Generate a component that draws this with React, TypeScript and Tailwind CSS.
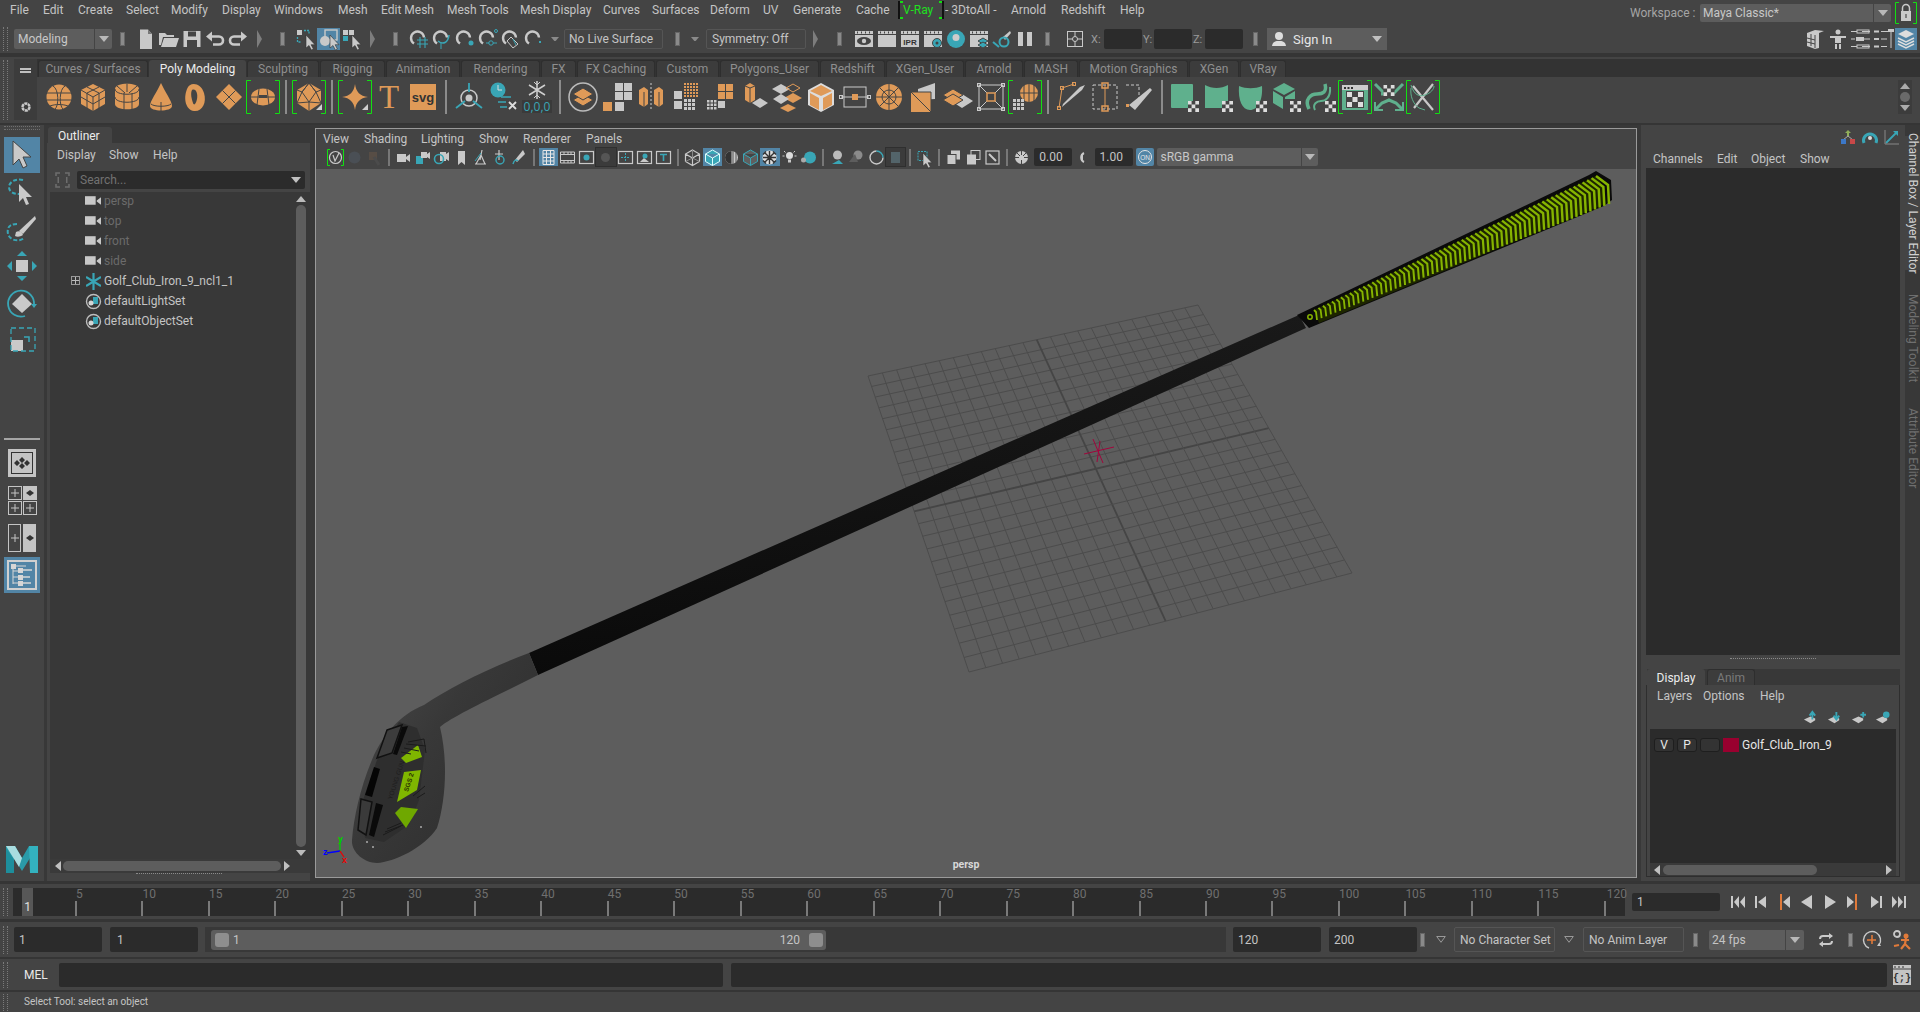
import React from 'react';

const G = '#c9c9c9', T = '#39a6b6', O = '#df9a58', M = '#5fb08d', D = '#444444';

type P = { children?: React.ReactNode };
const V = ({ s = 22, v = 22, children }: P & { s?: number; v?: number }) => (
  <svg width={s} height={s} viewBox={`0 0 ${v} ${v}`} className="block shrink-0 overflow-visible">{children}</svg>
);
const Slot = ({ children, active }: P & { active?: boolean }) => (
  <div className={`w-[23px] h-[22px] shrink-0 flex items-center justify-center ${active ? 'bg-[#5285a6]' : ''}`}>{children}</div>
);
const Sep = ({ c }: { c: string }) => (
  <div className={`${c} h-[20px] shrink-0 flex items-center justify-center`}>
    <div className="w-[3px] h-[12px] bg-[#8a8a8a] outline outline-1 outline-[#666]" />
  </div>
);
const Handle = ({ c }: { c: string }) => (
  <div className={`${c} w-[5px] shrink-0 border-x border-dotted border-[#7a7a7a]`} />
);
const Fold = ({ c }: { c: string }) => (
  <div className={`${c} shrink-0 flex items-center justify-center`}>
    <svg width="6" height="18" viewBox="0 0 6 18"><path d="M0 0l5 9-5 9z" fill="#7d7d7d" /></svg>
  </div>
);
const Tri = ({ c = '#b8b8b8', s = 10 }: { c?: string; s?: number }) => (
  <svg width={s} height={s * 0.6} viewBox="0 0 10 6" className="block shrink-0"><path d="M0 0h10L5 6z" fill={c} /></svg>
);
const HollowTri = () => (
  <svg width="10" height="7" viewBox="0 0 10 7" className="block shrink-0"><path d="M.7.5h8.6L5 6.3z" fill="none" stroke="#999" /></svg>
);
const Cur = ({ x = 0, y = 0, f = G }: { x?: number; y?: number; f?: string }) => (
  <path transform={`translate(${x} ${y})`} d="M0 0v13l3-2.5 2.4 4.5 2-1-2.3-4.3H9z" fill={f} stroke="#333" strokeWidth=".6" />
);
const Mag = ({ children }: P) => (
  <V>
    <path d="M5 15.5a6.5 6.5 0 1 1 10-6" fill="none" stroke={G} strokeWidth="2.4" />
    {children}
  </V>
);
const Clap = ({ children }: P) => (
  <V>
    <path d="M2 3h18v3H2z" fill={G} />
    <path d="M4 3.5h1v2H4zM8 3.5h1v2H8zM12 3.5h1v2h-1zM16 3.5h1v2h-1z" fill="#444" />
    <rect x="2" y="7" width="18" height="12" fill={G} />
    {children}
  </V>
);

const statusA = [
  <V key="a"><path d="M5 1.500h8l4 4.500v15H5z" fill={G} /><path d="M13 1.500v4.500h4z" fill="#777" /></V>,
  <V key="b"><path d="M1 5h6l2 2h7v2H5l-2 8H1z" fill={G} /><path d="M6 10h15l-3 9H3z" fill={G} /></V>,
  <V key="c"><path d="M2.500 3h17v16h-17z" fill={G} /><rect x="7" y="3.500" width="8" height="5" fill="#444" /><rect x="6" y="12" width="10" height="7" fill="#444" /></V>,
  <V key="d"><path d="M7 8.500h8a4 4 0 0 1 0 8H9" fill="none" stroke={G} strokeWidth="2.600" /><path d="M8 3.500v10l-6-5z" fill={G} /></V>,
  <V key="e"><path d="M15 8.500H7a4 4 0 0 0 0 8h6" fill="none" stroke={G} strokeWidth="2.600" /><path d="M14 3.500v10l6-5z" fill={G} /></V>,
];
const statusB = [
  <V key="a"><rect x="2" y="2" width="5" height="5" fill={G} /><path d="M9 2.500h5v4M2.500 9v5h4" fill="none" stroke={T} strokeWidth="1.300" strokeDasharray="2 1" /><Cur x={11} y={7} /></V>,
  <V key="b"><rect x="7" y="2" width="12" height="10" fill="none" stroke={G} strokeWidth="1.400" /><circle cx="7" cy="13" r="5" fill={G} /><Cur x={12} y={7} /></V>,
  <V key="c"><rect x="2" y="2" width="5" height="5" fill={G} /><rect x="8" y="2" width="5" height="5" fill={G} /><rect x="2" y="8" width="5" height="5" fill={T} /><Cur x={11} y={7} /></V>,
];
const magnets = [
  <Mag key="a"><path d="M8 12h11M8 16h11M11 9v11M16 9v11" stroke={T} strokeWidth="1.100" /></Mag>,
  <Mag key="b"><path d="M6 13c5 4 10 2 11-6" fill="none" stroke={T} strokeWidth="1.600" /><path d="M9 15v6" stroke={T} /></Mag>,
  <Mag key="c"><circle cx="16" cy="15" r="2.500" fill={T} /></Mag>,
  <Mag key="d"><circle cx="13" cy="15" r="2.200" fill="none" stroke={T} /><circle cx="18" cy="3" r="1.500" fill="none" stroke={T} /><path d="M8 15h3M15 15h4" stroke={T} /></Mag>,
  <Mag key="e"><path d="M10 9l7 7-5 4-6-7z" fill="none" stroke={G} /><path d="M12 11l3 6" stroke={T} /></Mag>,
  <Mag key="f"><path d="M16 13v2" stroke={T} strokeWidth="2" /></Mag>,
];
const render = [
  <Clap key="a"><ellipse cx="11" cy="13" rx="7" ry="4" fill="#444" /><circle cx="11" cy="13" r="2.200" fill={G} /></Clap>,
  <Clap key="b" />,
  <Clap key="c"><text x="11" y="17" textAnchor="middle" fontSize="8" fontWeight="700" fill="#333" fontFamily="Liberation Sans, sans-serif">IPR</text></Clap>,
  <Clap key="d"><circle cx="15" cy="15" r="4.500" fill={T} stroke="#444" /><circle cx="15" cy="15" r="1.500" fill="#444" /></Clap>,
  <V key="e"><circle cx="11" cy="11" r="9" fill={T} /><circle cx="11" cy="9.500" r="3.500" fill="#ccc" /></V>,
  <Clap key="f"><path d="M15 10l5 3-5 3-5-3z" fill={T} stroke="#444" /><path d="M15 14l5 3-5 3-5-3z" fill={T} stroke="#444" /></Clap>,
  <V key="g"><path d="M12 9l7-6 1 2-6 7z" fill={G} /><circle cx="13" cy="14" r="4.500" fill="none" stroke={T} strokeWidth="2" /><path d="M2 14l6 5" stroke={T} strokeWidth="2" /></V>,
  <V key="h"><rect x="4" y="4" width="5" height="14" fill={G} /><rect x="13" y="4" width="5" height="14" fill={G} /></V>,
];

const right = [
  <V key="a"><path d="M3 5l8-3 9 1-5 2v15l-4 1-8-3z" fill={G} /><path d="M7 6v12M11 7v13M3 10l8 2M3 14l8 2" stroke="#444" /></V>,
  <V key="b"><circle cx="11" cy="4" r="2.500" fill={G} /><path d="M3 8h16v2h-5v5h-6v-5H3z" fill={G} /><path d="M8 16h2v5H8zM12 16h2v5h-2z" fill={G} /></V>,
  <V key="c"><path d="M1 3.500h6M12 3.500h8M1 11h4M12 11h8M1 18.500h6M12 18.500h8" stroke={G} /><rect x="7" y="2" width="12" height="3" fill="none" stroke={G} /><rect x="6" y="9" width="8" height="4" fill={G} /><rect x="7" y="17" width="12" height="3" fill="none" stroke={G} /></V>,
  <V key="d"><path d="M1 3.500h5M1 11h5M1 18.500h5" stroke={G} strokeWidth="2" /><path d="M8 3.500h10M8 11h6M8 18.500h6" stroke={G} /><path d="M18 2v18" stroke={G} /><rect x="15" y="1" width="6" height="3" fill={G} /></V>,
];

const O1 = { fill: O };
const Br = () => <path d="M5 .5H.5v33H5M29 .5h4.500v33H29" fill="none" stroke="#12e012" />;
const Corner = () => <path d="M30 30h-6l6-6z" fill="#cfcfcf" />;
const Chk = ({ x, y }: { x: number; y: number }) => (
  <g transform={`translate(${x} ${y})`}><rect width="11" height="11" fill="#444" /><path d="M0 0h3.600v3.600H0zM7.300 0H11v3.600H7.300zM3.600 3.600h3.700v3.700H3.600zM0 7.300h3.600V11H0zM7.300 7.300H11V11H7.300z" fill="#ddd" /></g>
);
const Sq = ({ x, y, s = 7, f = '#c8c8c8' }: { x: number; y: number; s?: number; f?: string }) => <rect x={x} y={y} width={s} height={s} fill={f} />;
const Dots = ({ x, y, n = 3, f = '#c8c8c8', g = 3 }: { x: number; y: number; n?: number; f?: string; g?: number }) => (
  <g>{Array.from({ length: n * n }).map((_, i) => <rect key={i} x={x + (i % n) * g} y={y + Math.floor(i / n) * g} width={g - 1} height={g - 1} fill={f} />)}</g>
);
const Nodes = ({ pts, f = '#ccc' }: { pts: number[][]; f?: string }) => (
  <g>{pts.map((p, i) => <rect key={i} x={p[0] - 1.500} y={p[1] - 1.500} width="3" height="3" fill="none" stroke={f} />)}</g>
);
const Dia = ({ x, y, w, h, f, st }: { x: number; y: number; w: number; h: number; f: string; st?: string }) => (
  <path d={`M${x} ${y - h}L${x + w} ${y}L${x} ${y + h}L${x - w} ${y}z`} fill={f} stroke={st} />
);

const shelf1 = [
  <g key="a"><circle cx="17" cy="17" r="12.500" {...O1} /><path d="M5 13h24M4.500 20h25M8 26c5-2 13-2 18 0M11 6c6 3 6 20 2 23M23 6c-6 3-6 20-2 23" fill="none" stroke="#444" /></g>,
  <g key="b"><path d="M17 4l12 6v14l-12 7-12-7V10z" {...O1} /><path d="M5 10l12 7 12-7M17 17v14M11 7l12 6v15M23 7l-12 6v15M5 17l12 7 12-7" fill="none" stroke="#444" /></g>,
  <g key="c"><path d="M5 9c0-7 24-7 24 0v15c0 7-24 7-24 0z" {...O1} /><path d="M5 9c0 7 24 7 24 0M5 17c0 7 24 7 24 0M14 13v17M22 13v17M17 4v8M7 6l8 7M27 6l-8 7" fill="none" stroke="#444" /></g>,
  <g key="d"><path d="M17 3c4 9 11 18 11 23 0 6-22 6-22 0 0-5 7-14 11-23z" {...O1} /><path d="M17 22v9M7 24c3 3 17 3 20 0" fill="none" stroke="#444" /></g>,
  <g key="e"><path d="M9 9c3-8 14-6 17 4 3 10-2 19-10 18C8 30 5 19 9 9z" {...O1} /><path d="M14 10c4-2 6 4 5 9s-3 7-4 4-3-9-1-13z" fill="#444" /></g>,
  <g key="f"><path d="M17 4l13 13-13 13L4 17z" {...O1} /><path d="M10.500 10.500l13 13M23.500 10.500l-13 13" stroke="#444" /></g>,
  <g key="g"><Br /><ellipse cx="17" cy="17" rx="12" ry="8.500" {...O1} /><path d="M5 17h24M13 9l-2 16M21 9l2 16" stroke="#444" /><rect x="13" y="15" width="8" height="3" fill="#444" /></g>,
];
const shelf2 = [<g key="a"><Br /><path d="M17 3l12 7v13l-12 8-12-8V10z" {...O1} /><path d="M17 3l-7 9 7 10 7-10zM5 10l5 2 7-9 7 9 5-2M10 12l-5 11 12-1 12 1-5-11M17 22v9" fill="none" stroke="#444" /><Corner /></g>];
const shelf3 = [
  <g key="a"><Br /><path d="M17 4c1 8 5 12 13 13-8 1-12 5-13 13-1-8-5-12-13-13 8-1 12-5 13-13z" {...O1} /><Corner /></g>,
  <text key="b" x="17" y="28" textAnchor="middle" fontSize="33" fontWeight="400" fill={O} fontFamily="Liberation Serif, serif">T</text>,
  <g key="c"><rect x="4" y="4" width="26" height="26" {...O1} /><text x="17" y="22" textAnchor="middle" fontSize="13" fontWeight="700" fill="#333" fontFamily="Liberation Sans, sans-serif">svg</text></g>,
];
const shelf4 = [
  <g key="a"><circle cx="17" cy="18" r="8" fill="none" stroke={G} strokeWidth="1.500" /><circle cx="17" cy="18" r="3.500" fill={G} /><path d="M17 3v9M13 21l-9 7M21 21l9 7" stroke={T} strokeWidth="1.800" /></g>,
  <g key="b"><circle cx="12" cy="10" r="7.500" fill={T} /><path d="M12 5v5h4" stroke="#ddd" fill="none" /><path d="M15 17h10M12 22h8M14 27h7" stroke={T} strokeWidth="1.300" /><path d="M23 22l7 7M30 22l-7 7" stroke="#ddd" strokeWidth="1.800" /></g>,
  <g key="c"><path d="M17 1v18M9 5l16 10M25 5L9 15" stroke="#cfcfcf" strokeWidth="1.500" /><path d="M14 2l3 3 3-3M14 18l3-3 3 3" stroke="#cfcfcf" fill="none" /><rect x="2" y="20" width="30" height="13" fill="#3a3a3a" /><text x="17" y="31" textAnchor="middle" fontSize="12" fill={T} fontFamily="Open Sans, sans-serif">0,0,0</text></g>,
];
const shelf5 = [
  <g key="a"><circle cx="17" cy="17" r="14" fill="none" stroke="#bbb" strokeWidth="1.500" /><Dia x={17} y={20} w={10} h={6} f={O} st="#444" /><Dia x={17} y={14} w={10} h={6} f={O} st="#444" /></g>,
  <g key="b"><Sq x={15} y={3} s={8} /><Sq x={24} y={3} s={8} /><Sq x={24} y={12} s={8} /><Sq x={15} y={12} s={8} /><Sq x={3} y={22} s={9} f={O} /><Sq x={15} y={22} s={9} /></g>,
  <g key="c"><path d="M5 10l5-3 4 3v14l-4 3-5-3zM20 10l5-3 4 3v14l-4 3-5-3z" {...O1} /><path d="M17 3v28" stroke="#ccc" strokeDasharray="2 2" /><path d="M10 12v15M25 12v15" stroke="#444" /></g>,
  <g key="d"><Dots x={16} y={3} n={5} f={O} /><Sq x={6} y={11} s={8} /><Sq x={6} y={21} s={8} /><Dots x={16} y={19} n={3} g={4} /></g>,
  <g key="e"><Dots x={5} y={20} n={3} g={3.500} /><Sq x={16} y={4} s={7} f={O} /><Sq x={24} y={4} s={7} f={O} /><Sq x={16} y={12} s={7} f={O} /><Sq x={24} y={12} s={7} f={O} /><Sq x={16} y={21} s={7} /></g>,
  <g key="f"><path d="M9 6l5-3 5 3v14l-5 3-5-3z" {...O1} /><path d="M14 8v15M9 6l5 2 5-2" stroke="#444" fill="none" /><Dia x={24} y={23} w={8} h={5} f="#c8c8c8" /></g>,
  <g key="g"><Dia x={11} y={9} w={9} h={5} f="#c8c8c8" /><Dia x={23} y={8} w={7} h={4} f="none" st={O} /><Dia x={23} y={18} w={9} h={5} f={O} /><Dia x={11} y={19} w={8} h={5} f="#c8c8c8" /><Dia x={18} y={28} w={8} h={4} f={O} /></g>,
  <g key="h"><path d="M17 3l13 7v15l-13 7-13-7V10z" fill="#ddd" /><path d="M17 5l11 6-11 5-11-5z" {...O1} /><path d="M6 13l9 5v12l-9-5z" {...O1} /><path d="M19 18l9-5v12l-9 5z" {...O1} /></g>,
  <g key="i"><rect x="6" y="7" width="22" height="20" fill="none" stroke={G} /><path d="M3 17h28" stroke={G} /><Nodes pts={[[3, 17], [31, 17]]} /><Sq x={14} y={14} s={6} f={O} /></g>,
  <g key="j"><circle cx="17" cy="17" r="13" {...O1} /><circle cx="17" cy="17" r="7" fill="none" stroke="#444" /><path d="M17 4v26M4 17h26M8 8l18 18M26 8L8 26" stroke="#444" /></g>,
  <g key="k"><path d="M12 9L29 3v16L12 20z" fill="#c8c8c8" /><path d="M5 12l20 20H5z" {...O1} /><path d="M5 12h20v20z" fill={O} stroke="#444" /></g>,
  <g key="l"><Dia x={22} y={21} w={11} h={7} f="#c8c8c8" /><Dia x={13} y={15} w={10} h={6} f={O} st="#444" /><Dia x={13} y={20} w={10} h={6} f={O} st="#444" /></g>,
  <g key="m"><rect x="5" y="5" width="24" height="24" fill="none" stroke={G} /><path d="M5 5l24 24M29 5L5 29" stroke={G} /><Nodes pts={[[5, 5], [29, 5], [5, 29], [29, 29]]} /><rect x="13" y="13" width="8" height="8" fill="#444" stroke={O} strokeWidth="1.500" /></g>,
  <g key="n"><Br /><circle cx="21" cy="13" r="9" {...O1} /><path d="M12 13h18M21 4v18M16 5v16M26 5v16" stroke="#444" /><Dots x={5} y={19} n={3} g={4} /></g>,
];
const shelf6 = [
  <g key="a"><path d="M5 28l3-20 12-4" fill="none" stroke={O} /><Nodes pts={[[5, 28], [8, 8], [20, 4]]} f={O} /><path d="M8 27L28 10l3-5-5 2L9 24z" fill="#c8c8c8" /></g>,
  <g key="b"><rect x="5" y="5" width="24" height="24" fill="none" stroke={G} strokeDasharray="3 2" /><path d="M17 5v24" stroke={O} /><rect x="14" y="3" width="6" height="5" fill="none" stroke={O} strokeWidth="1.500" /><rect x="14" y="26" width="6" height="5" fill="none" stroke={O} strokeWidth="1.500" /></g>,
  <g key="c"><path d="M4 5h13v13" fill="none" stroke={G} strokeDasharray="3 2" /><path d="M7 25L28 8l2 2-17 20z" fill="#c8c8c8" /><rect x="4" y="24" width="3" height="3" fill={O} /></g>,
];
const Gn = ({ children }: P) => <g>{children}</g>;
const shelf7 = [
  <Gn key="a"><rect x="3" y="4" width="22" height="24" rx="1" fill={M} /><Chk x={20} y={21} /></Gn>,
  <Gn key="b"><path d="M3 5c7 4 16 4 23 0v23H3z" fill={M} /><Chk x={20} y={21} /></Gn>,
  <Gn key="c"><path d="M3 6c7 3 16 3 23 0 1 14-4 24-12 24S2 20 3 6z" fill={M} /><Chk x={20} y={21} /></Gn>,
  <Gn key="d"><path d="M14 3l11 6-11 6L3 9z" fill={M} /><path d="M3 11l10 6v12L3 23zM15 17l10-6v8H15z" fill={M} /><Chk x={20} y={21} /></Gn>,
  <Gn key="e"><path d="M5 29c-5-10 2-15 8-15s10-2 8-10" fill="none" stroke={M} strokeWidth="3.500" /><path d="M11 30c-3-6 2-9 6-9s10-3 9-14" fill="none" stroke={M} strokeWidth="2" /><Chk x={21} y={21} /></Gn>,
  <Gn key="f"><Br /><rect x="4" y="5" width="26" height="25" fill={M} /><rect x="4" y="5" width="26" height="5" fill="#ccc" /><path d="M6 7h2v2H6zM9.500 7h2v2h-2zM13 7h2v2h-2z" fill="#333" /><rect x="8" y="11" width="18" height="17" fill="#444" /><path d="M9 12h5v5H9zM20 12h5v5h-5zM14.500 17h5v5h-5zM9 22h5v5H9zM20 22h5v5h-5z" fill="#ddd" /></Gn>,
  <Gn key="g"><path d="M3 4l10 10H9l8 0M31 4L21 14M3 30l7-7 7-3 7 3 7 7" fill="none" stroke={M} strokeWidth="3" /><path d="M3 22v8h8M31 22v8h-8" fill="none" stroke={M} strokeWidth="2" /><Chk x={11.500} y={5} /></Gn>,
  <Gn key="h"><Br /><path d="M7 6l20 24M27 4L8 28" stroke="#c8c8c8" strokeWidth="2.200" /><path d="M5 5c3 10 8 12 14 10s9-6 9-9M5 8c-1 8 2 16 8 20l6 2" fill="none" stroke={M} /></Gn>,
];

const ShelfIcon = ({ children }: P) => (
  <div className="w-[34px] h-[34px] shrink-0"><V s={34} v={34}>{children}</V></div>
);
const ShelfSep = () => (
  <div className="w-[12px] h-[34px] shrink-0 flex justify-center"><div className="w-[2px] h-full bg-[#8c8c8c]" /></div>
);

const menus: [string, string][] = [
  ['File', 'w-[33px]'], ['Edit', 'w-[35px]'], ['Create', 'w-[48px]'], ['Select', 'w-[45px]'], ['Modify', 'w-[51px]'], ['Display', 'w-[52px]'],
  ['Windows', 'w-[64px]'], ['Mesh', 'w-[43px]'], ['Edit Mesh', 'w-[66px]'], ['Mesh Tools', 'w-[73px]'], ['Mesh Display', 'w-[83px]'],
  ['Curves', 'w-[49px]'], ['Surfaces', 'w-[58px]'], ['Deform', 'w-[53px]'], ['UV', 'w-[30px]'], ['Generate', 'w-[63px]'], ['Cache', 'w-[42px]'],
];
const menus2: [string, string][] = [['- 3DtoAll -', 'w-[66px]'], ['Arnold', 'w-[50px]'], ['Redshift', 'w-[59px]'], ['Help', 'w-[30px]']];

const tabs: [string, string][] = [
  ['Curves / Surfaces', 'w-[110px]'], ['Poly Modeling', 'w-[97px]'], ['Sculpting', 'w-[72px]'], ['Rigging', 'w-[65px]'], ['Animation', 'w-[74px]'], ['Rendering', 'w-[79px]'],
  ['FX', 'w-[35px]'], ['FX Caching', 'w-[78px]'], ['Custom', 'w-[63px]'], ['Polygons_User', 'w-[99px]'], ['Redshift', 'w-[65px]'], ['XGen_User', 'w-[78px]'], ['Arnold', 'w-[58px]'],
  ['MASH', 'w-[54px]'], ['Motion Graphics', 'w-[109px]'], ['XGen', 'w-[50px]'], ['VRay', 'w-[46px]'],
];

const VI = ({ children, a, box }: P & { a?: boolean; box?: boolean }) => (
  <div className={`w-[19.25px] h-[18px] shrink-0 flex items-center justify-center ${a ? 'bg-[#5285a6]' : ''} ${box ? 'bg-[#3b3b3b] outline outline-1 outline-[#2f2f2f]' : ''}`}>
    <V s={17} v={17}>{children}</V>
  </div>
);
const VSep = () => <div className="w-[10px] h-[17px] shrink-0 flex justify-center"><div className="w-[2px] h-full bg-[#777]" /></div>;
const W = { fill: 'none', stroke: G, strokeWidth: 1.200 };
const vBar1 = [
  <VI key="a"><path d="M3 .5H.5v16H3M14 .5h2.500v16H14" fill="none" stroke="#12e012" /><circle cx="8.500" cy="8.500" r="6" {...W} /><path d="M6 6l2 6 4-8" {...W} /></VI>,
  <VI key="b"><circle cx="8.500" cy="8.500" r="6" fill="#4a4f55" /></VI>,
  <VI key="c"><rect x="3" y="3" width="8" height="8" fill="#574d45" /><path d="M8 8l5 8" stroke="#4b4b4b" strokeWidth="3" /></VI>,
];
const vBar2 = [
  <VI key="a"><rect x="2" y="5" width="9" height="8" fill={G} /><path d="M11 8l4-3v8l-4-3z" fill={G} /></VI>,
  <VI key="b"><rect x="2" y="7" width="7" height="8" fill={T} /><rect x="7" y="3" width="6" height="6" fill={G} /><path d="M13 5l3-2v7l-3-2z" fill={G} /></VI>,
  <VI key="c"><rect x="7" y="3" width="6" height="9" fill={G} /><path d="M13 5l3-2v9l-3-2z" fill={G} /><circle cx="6" cy="10" r="4.500" fill="none" stroke={T} strokeWidth="1.600" /></VI>,
  <VI key="d"><path d="M5 2h7v14l-3.500-3L5 16z" fill={G} /></VI>,
  <VI key="e"><path d="M10 1l-2 10M3 15h11M4 15l5-9 4 9" {...W} /><path d="M3 12l6-8" stroke={T} /></VI>,
  <VI key="f"><path d="M8 1v10M4 5h8" {...W} /><circle cx="9" cy="11" r="4" fill="none" stroke={T} strokeWidth="1.400" /></VI>,
  <VI key="g"><path d="M13 1L5 11l2 2 8-8z" fill={G} /><path d="M3 15c1-4 3-5 5-3" fill="none" stroke={T} strokeWidth="1.400" /></VI>,
];
const vBar3 = [
  <VI key="a" a><path d="M3 1.500h11v14H3zM3 5h11M3 8.500h11M3 12h11M6.500 1.500v14M10.500 1.500v14" fill="none" stroke="#e6e6e6" /></VI>,
  <VI key="b"><path d="M1.500 3h14v11h-14zM1.500 5.500h14M1.500 11.500h14M5 3v2.500M9 3v2.500M12 3v2.500M5 11.500V14M9 11.500V14M12 11.500V14" fill="none" stroke={G} /></VI>,
  <VI key="c"><rect x="1.500" y="2.500" width="14" height="12" {...W} /><circle cx="8.500" cy="8.500" r="3" fill={T} /></VI>,
  <VI key="d" box><circle cx="8.500" cy="8.500" r="4.500" fill="#555" /></VI>,
  <VI key="e"><rect x="1.500" y="2.500" width="14" height="12" {...W} /><path d="M8.500 4v9M4 8.500h9" stroke={T} strokeDasharray="2 1" /></VI>,
  <VI key="f"><rect x="1.500" y="2.500" width="14" height="12" {...W} /><path d="M4 13l4-4 5 4z" fill={G} /><circle cx="9" cy="7" r="2.500" fill={T} /></VI>,
  <VI key="g"><rect x="1.500" y="2.500" width="14" height="12" {...W} /><path d="M5 5.500h7M8.500 5.500V12" stroke={T} strokeWidth="1.600" /></VI>,
];
const cube = 'M8.500 1l7 4v7.500l-7 4-7-4V5zM1.500 5l7 4 7-4M8.500 9v7.500';
const vBar4 = [
  <VI key="a"><path d={cube} {...W} /><path d="M1.500 12.500l7-3.500 7 3.500M8.500 1v8" fill="none" stroke="#888" /></VI>,
  <VI key="b" a><path d={cube} fill={T} stroke="#dff" /></VI>,
  <VI key="c"><circle cx="8.500" cy="8.500" r="6.500" fill={G} /><path d="M8.500 2a6.500 6.500 0 0 0 0 13z" fill="#333" /><path d="M10 2v13M13 3.500v10" stroke="#555" /></VI>,
  <VI key="d"><path d={cube} fill="#5f5f5f" stroke={T} /></VI>,
  <VI key="e" a><circle cx="8.500" cy="8.500" r="7" fill="#ddd" /><path d="M4 4l9 9M13 4l-9 9M2 8.500h13M8.500 2v13M5 2.500l-3 3M12 2.500l3 3M5 14.500l-3-3M12 14.500l3-3" stroke="#333" strokeWidth="1.400" /></VI>,
  <VI key="f"><circle cx="8.500" cy="6.500" r="3.500" fill="#ddd" /><rect x="7" y="10.500" width="3" height="3" fill={G} /><path d="M3 2l1.500 1.500M14 2l-1.500 1.500M1.500 7h2M13.500 7h2" stroke={G} /></VI>,
  <VI key="g"><circle cx="10" cy="8.500" r="6" fill={T} /><circle cx="3.500" cy="11" r="2.500" fill="#aaa" /></VI>,
];
const vBar5 = [
  <VI key="a"><circle cx="8.500" cy="6" r="4.500" fill="#bbb" /><path d="M3 15l7-4 4 4" fill={T} /></VI>,
  <VI key="b"><circle cx="10" cy="6" r="4.500" fill="#8b8b8b" /><path d="M1 13l6-8 3 8z" fill="#5d5d5d" /></VI>,
  <VI key="c"><path d="M8.500 2A6.500 6.500 0 1 0 15 8.500" fill="none" stroke={G} strokeWidth="1.400" /><path d="M15 8.500A6.500 6.500 0 0 0 8.500 2" fill="none" stroke={T} strokeWidth="1.400" /></VI>,
  <VI key="d" box><rect x="4" y="3" width="9" height="11" fill="#53646a" /></VI>,
];
const vBar6 = [
  <VI key="a"><path d="M2 2.500h9v9H2z" fill="none" stroke={T} strokeDasharray="2 1" /><Cur x={7} y={4} /></VI>,
  <VI key="b"><rect x="6" y="1.500" width="9" height="9" fill={G} /><rect x="2" y="5.500" width="9" height="10" fill={G} stroke="#444" /></VI>,
  <VI key="c"><rect x="6" y="1.500" width="9" height="9" fill="none" stroke={G} /><rect x="2" y="5.500" width="9" height="10" fill={G} /></VI>,
  <VI key="d"><rect x="2" y="2" width="13" height="13" {...W} /><path d="M5 5l7 7" stroke={G} strokeWidth="2" /></VI>,
];

const Dark = ({ c, children }: P & { c: string }) => <div className={`${c} bg-[#2b2b2b] rounded-[2px] shrink-0 flex items-center text-[#c4c4c4]`}>{children}</div>;

const Cam = () => <svg width="16" height="12" viewBox="0 0 15 11" className="block shrink-0"><rect y="1" width="10" height="8" fill="#c8c8c8" /><path d="M11 5l4-3v7l-4-3z" fill="#c8c8c8" /></svg>;
const SetIc = () => (
  <V s={17} v={17}><circle cx="8.500" cy="8.500" r="7" fill="none" stroke="#bdbdbd" strokeWidth="1.400" /><path d="M8 4h5v7H8z" fill={T} /><circle cx="6" cy="10" r="2.500" fill="#d5d5d5" /></V>
);

const Row = ({ icon, text, dim, plus }: { icon: React.ReactNode; text: string; dim?: boolean; plus?: boolean }) => (
  <div className="h-[20px] flex items-center relative pl-[34px]">
    {plus && <div className="absolute left-[21px] top-[5px] w-[9px] h-[9px] border border-[#999] text-[#bbb] flex items-center justify-center"><svg width="7" height="7"><path d="M3.500 0v7M0 3.500h7" stroke="#bbb" /></svg></div>}
    <div className="w-[18px] flex justify-center shrink-0">{icon}</div>
    <span className={`ml-[2px] ${dim ? 'text-[#6b6b6b]' : 'text-[#c4c4c4]'}`}>{text}</span>
  </div>
);

const Tool = ({ children, a }: P & { a?: boolean }) => (
  <div className={`w-[36px] h-[36px] shrink-0 flex items-center justify-center ${a ? 'bg-[#5285a6]' : ''}`}><V s={34} v={34}>{children}</V></div>
);

const homography = () => {
  const [x0, y0, x1, y1, x2, y2, x3, y3] = [869, 376, 1199, 305, 1353, 573, 970, 672];
  const dx1 = x1 - x2, dx2 = x3 - x2, sx = x0 - x1 + x2 - x3, dy1 = y1 - y2, dy2 = y3 - y2, sy = y0 - y1 + y2 - y3;
  const den = dx1 * dy2 - dx2 * dy1;
  const g = (sx * dy2 - dx2 * sy) / den, h = (dx1 * sy - sx * dy1) / den;
  const a = x1 - x0 + g * x1, b = x3 - x0 + h * x3, d = y1 - y0 + g * y1, e = y3 - y0 + h * y3;
  return (u: number, v: number) => {
    const w = g * u + h * v + 1;
    return [(a * u + b * v + x0) / w, (d * u + e * v + y0) / w];
  };
};

const Grid = () => {
  const H = homography();
  const n = 24;
  const lines: React.ReactNode[] = [];
  for (let i = 0; i <= n; i++) {
    const t = i / n;
    const [a, b] = H(t, 0), [c, d] = H(t, 1), [e, f] = H(0, t), [g, h] = H(1, t);
    const mid = i === n / 2;
    lines.push(<line key={`u${i}`} x1={a} y1={b} x2={c} y2={d} stroke={mid ? '#454545' : '#4c4c4c'} strokeWidth={mid ? 1.800 : 1} />);
    lines.push(<line key={`v${i}`} x1={e} y1={f} x2={g} y2={h} stroke={mid ? '#454545' : '#4c4c4c'} strokeWidth={mid ? 1.800 : 1} />);
  }
  return <g>{lines}</g>;
};

const Grip = () => {
  const out: React.ReactNode[] = [];
  const n = 64;
  for (let i = 0; i < n; i++) {
    const t = i / (n - 1);
    const x0 = 1315 + (1597 - 1315) * t, y0 = 310 + (176 - 310) * t;
    const dx = 2 + 10 * t, dy = 2 + 7 * t, h = 8 + 11 * t;
    out.push(<polyline key={i} points={`${x0},${y0} ${x0 + dx},${y0 + dy} ${x0 + dx + 1},${y0 + dy + h}`} fill="none" stroke="#86b400" strokeWidth={1.800 + 0.700 * t} />);
  }
  return <g>{out}</g>;
};

const Scene = () => (
  <svg width="1319" height="708" viewBox="317 169 1319 708" className="block">
    <defs>
      <linearGradient id="shaft" x1="0" y1="0" x2="0.120" y2="1">
        <stop offset="0" stopColor="#1b1b1b" /><stop offset=".6" stopColor="#111" /><stop offset="1" stopColor="#0a0a0a" />
      </linearGradient>
      <linearGradient id="hosel" x1="0" y1="0" x2="1" y2="0.800">
        <stop offset="0" stopColor="#4a4a4a" /><stop offset=".45" stopColor="#383838" /><stop offset="1" stopColor="#2c2c2c" />
      </linearGradient>
    </defs>
    <Grid />
    <path d="M1085 454l30-7M1094 439l10 24M1101 441l-3 21" fill="none" stroke="#a2053c" />
    <path d="M1300 315L530 653l9 22L1307 328z" fill="url(#shaft)" />
    <path d="M530 653C490 668 450 688 425 705C400 715 385 735 375 755C362 785 355 815 353 840C352 852 365 863 378 863C395 862 425 848 438 828C447 800 449 760 441 727C455 715 500 695 539 675Z" fill="url(#hosel)" />
    <path d="M400 722L418 728L426 750L420 800L410 825L385 842L366 838L364 800L378 760Z" fill="#2e2e2e" />
    <path d="M388 730l15-5-10 28-15 5z" fill="#3c3c3c" stroke="#111" strokeWidth="1.500" />
    <path d="M403 727l6-1-11 29-4-1z" fill="#0a0a0a" />
    <path d="M375 767l6 2-8 28-7-2z" fill="#050505" />
    <path d="M362 799l11 3-6 33-8-5z" fill="#3a3a3a" stroke="#111" strokeWidth="1.500" />
    <path d="M377 803l7 2-9 32-5-2z" fill="#0a0a0a" />
    <path d="M402 758l17-13 4 12-16 6z" fill="#7fb600" />
    <path d="M405 772l17-2-4 20-20 12z" fill="#7fb600" />
    <path d="M396 813l6-6 17 2-12 19z" fill="#6fa800" />
    <path d="M409 742l16-3 2 14M407 744l20 2M405 748l15 3M402 752l10 2M414 796l12-10M418 798l8-5M384 835l18-9M386 832l18-7M388 829l14-6" fill="none" stroke="#1b1b1b" />
    <text transform="translate(393 800) rotate(-72)" fontSize="6.500" fill="#1d1d1d" fontFamily="Liberation Sans, sans-serif">YOUNG GUN</text>
    <text transform="translate(409 792) rotate(-72)" fontSize="6.500" fill="#2b3500" fontWeight="700" fontFamily="Liberation Sans, sans-serif">SGS 2</text>
    <path d="M1298 315L1590 175l7-4 15 9 1 20-8 6L1310 328z" fill="#0a0a0a" />
    <path d="M1315 310L1597 176l8 11 1 17L1320 323z" fill="#1d2500" />
    <Grip />
    <circle cx="1311" cy="317" r="2.200" fill="none" stroke="#86b400" strokeWidth="1.500" />
    <circle cx="368" cy="842" r=".8" fill="#fff" /><circle cx="374" cy="847" r=".8" fill="#fff" /><circle cx="422" cy="827" r=".8" fill="#fff" />
    <path d="M341 851v-13" stroke="#0c0" strokeWidth="1.300" /><path d="M341 851l-13 2" stroke="#00f" strokeWidth="1.300" /><path d="M341 851l4 6" stroke="#e00" strokeWidth="1.300" />
    <text x="339" y="842" fontSize="9" fontWeight="700" fill="#0c0" fontFamily="Liberation Sans, sans-serif">y</text>
    <text x="324" y="855" fontSize="9" fontWeight="700" fill="#00f" fontFamily="Liberation Sans, sans-serif">z</text>
    <text x="343" y="863" fontSize="9" fontWeight="700" fill="#e00" fontFamily="Liberation Sans, sans-serif">x</text>
    <text x="967" y="868" textAnchor="middle" fontSize="10.500" fontWeight="700" fill="#d8d8d8" fontFamily="Roboto, sans-serif">persp</text>
  </svg>
);

const ticks = [5, 10, 15, 20, 25, 30, 35, 40, 45, 50, 55, 60, 65, 70, 75, 80, 85, 90, 95, 100, 105, 110, 115, 120];

const Tp = ({ children }: P) => <div className="w-[23px] h-[20px] shrink-0 flex items-center justify-center"><V s={18} v={18}>{children}</V></div>;

export default function App() {
  return (
    <div className="w-[1920px] h-[1012px] overflow-hidden flex flex-col bg-[#444444] text-[#c4c4c4] text-[12px] leading-none font-['Roboto',sans-serif]">
      {/* menu */}
      <div className="h-[24px] shrink-0 flex items-start pt-[2px] pl-[10px]">
        <div className="flex h-[18px] items-center -mt-[1px]">
          {menus.map(([t, w]) => <div key={t} className={`${w} shrink-0 whitespace-nowrap`}>{t}</div>)}
          <div className="w-[46px] shrink-0 flex items-center h-[18px] text-[#1fe01f] border-x-2 border-[#111] mr-[1px] pl-[3px] relative">
            <span className="absolute left-0 top-0 w-[3px] h-[2px] bg-[#12e012]" /><span className="absolute left-0 bottom-0 w-[3px] h-[2px] bg-[#12e012]" />
            <span className="absolute right-0 top-0 w-[3px] h-[2px] bg-[#12e012]" /><span className="absolute right-0 bottom-0 w-[3px] h-[2px] bg-[#12e012]" />
            V-Ray
          </div>
          {menus2.map(([t, w]) => <div key={t} className={`${w} shrink-0 whitespace-nowrap`}>{t}</div>)}
        </div>
        <div className="ml-auto flex items-center">
          <span className="text-[#a5a5a5] w-[70px] whitespace-nowrap text-[12px]">Workspace :</span>
          <div className="w-[191px] h-[18px] bg-[#5d5d5d] rounded-[2px] flex items-center pl-[3px] text-[#c8c8c8]">
            Maya Classic*
            <div className="ml-auto w-[18px] h-full border-l border-[#444] flex items-center justify-center"><Tri /></div>
          </div>
          <div className="ml-[4px] mr-[3px] w-[22px] h-[21px] flex items-center justify-center">
            <V s={22} v={22}>
              <path d="M4 .5H.5v21H4M18 .5h3.500v21H18" fill="none" stroke="#12e012" />
              <path d="M7.500 9V6a3.500 3.500 0 0 1 7 0v3" fill="none" stroke={G} strokeWidth="1.500" />
              <rect x="6" y="9" width="10" height="10" fill={G} /><rect x="10.500" y="12" width="1" height="4" fill="#333" />
            </V>
          </div>
        </div>
      </div>
      {/* status */}
      <div className="h-[29px] shrink-0 flex items-center pl-[3px] pt-[1px]">
        <Handle c="h-[24px] mr-[6px]" />
        <div className="w-[98px] h-[20px] bg-[#5d5d5d] rounded-[2px] flex items-center pl-[4px] text-[#c8c8c8] shrink-0">
          Modeling
          <div className="ml-auto w-[18px] h-full border-l border-[#444] flex items-center justify-center"><Tri /></div>
        </div>
        <Sep c="w-[20px] mr-[2px]" />
        {statusA.map((x, i) => <Slot key={i}>{x}</Slot>)}
        <Fold c="w-[21px]" />
        <Sep c="w-[24px]" />
        {statusB.map((x, i) => <Slot key={i} active={i === 1}>{x}</Slot>)}
        <Fold c="w-[20px]" />
        <Sep c="w-[25px]" />
        {magnets.map((x, i) => <Slot key={i}>{x}</Slot>)}
        <div className="w-[18px] flex justify-center shrink-0"><Tri c="#8a8a8a" s={8} /></div>
        <div className="w-[99px] h-[20px] border border-[#555] rounded-[2px] flex items-center pl-[4px] shrink-0 whitespace-nowrap">No Live Surface</div>
        <Sep c="w-[28px]" />
        <div className="w-[15px] shrink-0"><Tri c="#8a8a8a" s={8} /></div>
        <div className="w-[100px] h-[20px] border border-[#555] rounded-[2px] flex items-center pl-[5px] shrink-0 whitespace-nowrap">Symmetry: Off</div>
        <Fold c="w-[20px]" />
        <Sep c="w-[26px]" />
        {render.map((x, i) => <Slot key={i}>{x}</Slot>)}
        <Sep c="w-[22px]" />
        <div className="w-[33px] flex justify-center shrink-0">
          <V s={18} v={18}><rect x="1.500" y="1.500" width="15" height="15" fill="none" stroke={G} /><path d="M1.500 9h15M9 1.500v15" stroke={G} /><circle cx="9" cy="9" r="2.500" fill="#444" stroke={G} /></V>
        </div>
        <span className="w-[13px] text-[#9a9a9a] shrink-0 text-[11px]">X:</span><Dark c="w-[38px] h-[20px]" />
        <span className="w-[12px] text-[#9a9a9a] shrink-0 text-[11px] pl-[1px]">Y:</span><Dark c="w-[38px] h-[20px]" />
        <span className="w-[13px] text-[#9a9a9a] shrink-0 text-[11px] pl-[1px]">Z:</span><Dark c="w-[38px] h-[20px]" />
        <Sep c="w-[24px]" />
        <div className="w-[120px] h-[22px] bg-[#5d5d5d] flex items-center shrink-0 text-[#e6e6e6] text-[13px]">
          <svg width="18" height="18" viewBox="0 0 18 18" className="block mx-[3px]"><circle cx="9" cy="6" r="4" fill="#ddd" /><path d="M2 16c1-5 4-5 7-5s6 0 7 5z" fill="#ddd" /></svg>
          <span className="ml-[2px]">Sign In</span>
          <div className="ml-auto mr-[5px]"><Tri c="#c0c0c0" /></div>
        </div>
        <div className="ml-auto flex items-center pr-[3px]">
          {right.map((x, i) => <Slot key={i}>{x}</Slot>)}
          <div className="w-[22px] h-[22px] bg-[#5285a6] flex items-center justify-center">
            <V s={20} v={20}><path d="M10 1l8 4-8 4-8-4z" fill="#ddd" /><path d="M2 9l8 4 8-4M2 12l8 4 8-4M2 15l8 4 8-4" fill="none" stroke="#ddd" strokeWidth="1.400" /></V>
          </div>
        </div>
      </div>
      <div className="h-[4px] shrink-0 bg-[#353535]" />
      {/* shelf */}
      <div className="h-[66px] shrink-0 flex pl-[3px] pt-[1px]">
        <Handle c="h-[60px] mr-[6px] mt-[2px]" />
        <div className="w-[23px] h-[61px] mt-[1px] bg-[#3c3c3c] flex flex-col items-center justify-between pt-[9px] pb-[7px] shrink-0">
          <div className="w-[11px] h-[5px] border-y-2 border-[#c0c0c0]" />
          <svg width="12" height="12" viewBox="0 0 12 12"><circle cx="6" cy="6" r="3.500" fill="none" stroke="#c8c8c8" strokeWidth="2.500" strokeDasharray="3 .6" /></svg>
        </div>
        <div className="flex-1 min-w-0 flex flex-col">
          <div className="h-[18px] mt-[1px] bg-[#333333] flex items-end pl-[1px] gap-[1px] shrink-0">
            {tabs.map(([t, w], i) => (
              <div key={t} className={`${w} shrink-0 h-[17px] flex items-center justify-center rounded-t-[3px] whitespace-nowrap ${i === 1 ? 'bg-[#444] text-[#ececec]' : 'bg-[#3c3c3c] text-[#8f8f8f] border-x border-t border-[#2e2e2e]'}`}>{t}</div>
            ))}
          </div>
          <div className="flex items-center h-[34px] mt-[3px] pl-[5px]">
            {shelf1.map((x, i) => <ShelfIcon key={i}>{x}</ShelfIcon>)}
            <ShelfSep />
            {shelf2.map((x, i) => <ShelfIcon key={i}>{x}</ShelfIcon>)}
            <ShelfSep />
            {shelf3.map((x, i) => <ShelfIcon key={i}>{x}</ShelfIcon>)}
            <ShelfSep />
            {shelf4.map((x, i) => <ShelfIcon key={i}>{x}</ShelfIcon>)}
            <ShelfSep />
            {shelf5.map((x, i) => <ShelfIcon key={i}>{x}</ShelfIcon>)}
            <ShelfSep />
            {shelf6.map((x, i) => <ShelfIcon key={i}>{x}</ShelfIcon>)}
            <ShelfSep />
            {shelf7.map((x, i) => <ShelfIcon key={i}>{x}</ShelfIcon>)}
            <div className="ml-auto mr-[8px] w-[14px] h-[34px] bg-[#3c3c3c] flex flex-col items-center justify-center gap-[3px]">
              <svg width="10" height="6"><path d="M0 6h10L5 0z" fill="#aaa" /></svg>
              <div className="w-[10px] h-[10px] rounded-full bg-[#6a6a6a]" />
              <svg width="10" height="6"><path d="M0 0h10L5 6z" fill="#aaa" /></svg>
            </div>
          </div>
        </div>
      </div>
      <div className="h-[2px] shrink-0 bg-[#353535]" />
      {/* main */}
      <div className="h-[756px] shrink-0 flex bg-[#383838]">
        {/* toolbox */}
        <div className="w-[44px] shrink-0 bg-[#444] flex flex-col items-center pt-[1px]">
          <div className="w-[36px] h-[4px] border-y border-dotted border-[#6f6f6f] mb-[7px]" />
          <div className="flex flex-col gap-[1px]">
            <Tool a><path d="M8 3v24l6-6 4 9 4-2-4-9h8z" fill={G} stroke="#444" /></Tool>
            <Tool><path d="M18 5c-7-2-14 2-14 7s5 7 10 7" fill="none" stroke={T} strokeWidth="2" strokeDasharray="4 2" /><path d="M14 9v18l4-4 3 7 3-1-3-7h6z" fill={G} /></Tool>
            <Tool><path d="M30 4L14 19l4 3L31 7z" fill={G} /><path d="M11 20c3-2 6 0 7 3-3 2-6 2-8 1z" fill={G} /><path d="M12 12C3 12 2 17 3 22c2 7 12 8 16 4" fill="none" stroke={T} strokeWidth="2" strokeDasharray="4 2" /></Tool>
            <Tool><rect x="11" y="11" width="12" height="12" fill={G} /><path d="M17 2l5 5H12zM17 32l-5-5h10zM2 17l5-5v10zM32 17l-5 5V12z" fill={T} /></Tool>
            <Tool><path d="M17 8l10 10-10 9L7 18z" fill={G} /><path d="M29 19A13 13 0 1 0 20 30" fill="none" stroke={T} strokeWidth="1.800" /><path d="M26 18h6l-3 4z" fill={T} /></Tool>
            <Tool><rect x="6" y="17" width="12" height="11" fill={G} /><rect x="6" y="5" width="24" height="23" fill="none" stroke={T} strokeWidth="1.300" strokeDasharray="5 3" /><path d="M19 14h5v5" fill="none" stroke={T} strokeWidth="1.500" /></Tool>
          </div>
          <div className="w-[36px] h-[2px] bg-[#a5a5a5] mt-[80px] mb-[9px]" />
          <div className="w-[28px] h-[28px] bg-[#c4c4c4] flex items-center justify-center">
            <div className="w-[22px] h-[22px] border border-[#333] flex items-center justify-center">
              <svg width="16" height="12" viewBox="0 0 16 12"><path d="M8 0l3 3-3 3-3-3zM3 3l3 3-3 3-3-3zM13 3l3 3-3 3-3-3zM8 6l3 3-3 3-3-3z" fill="#333" /></svg>
            </div>
          </div>
          <div className="mt-[9px] grid grid-cols-2 gap-[1px] w-[29px]">
            {[0, 1, 2, 3].map(i => (
              <div key={i} className={`w-[14px] h-[14px] border border-[#c4c4c4] flex items-center justify-center ${i === 1 ? 'bg-[#c4c4c4]' : ''}`}>
                <svg width="8" height="8"><path d={i === 1 ? 'M4 1l4 3-4 3-4-3z' : 'M4 0v8M0 4h8'} fill="#333" stroke={i === 1 ? 'none' : '#c4c4c4'} /></svg>
              </div>
            ))}
          </div>
          <div className="mt-[9px] flex gap-[2px] w-[28px]">
            <div className="w-[13px] h-[28px] border border-[#c4c4c4] flex items-center justify-center"><svg width="8" height="8"><path d="M4 0v8M0 4h8" stroke="#c4c4c4" /></svg></div>
            <div className="w-[13px] h-[28px] bg-[#c4c4c4] flex items-center justify-center"><svg width="8" height="6"><path d="M4 0l4 3-4 3-4-3z" fill="#333" /></svg></div>
          </div>
          <div className="mt-[5px] w-[36px] h-[36px] bg-[#5285a6] flex items-center justify-center">
            <div className="w-[30px] h-[30px] border-2 border-[#d0d0d0] p-[1px]">
              <svg width="24" height="24" viewBox="0 0 24 24" className="block">
                <rect x="1" y="1" width="5" height="5" fill="#d6d6d6" /><path d="M3 6v15M3 8h6M3 14h6M3 20h6M6 3h10" stroke="#d6d6d6" />
                <rect x="8" y="5" width="5" height="5" fill="#d6d6d6" /><rect x="8" y="12" width="5" height="5" fill="#d6d6d6" /><rect x="8" y="18" width="5" height="5" fill="#d6d6d6" />
                <path d="M13 7h9M13 14h7M13 20h8" stroke="#d6d6d6" strokeWidth="1.600" />
              </svg>
            </div>
          </div>
          <div className="mt-auto mb-[7px]">
            <svg width="34" height="30" viewBox="0 0 34 30" className="block">
              <path d="M1 2h9l7 12 7-12h9v27h-8V14l-8 13-8-13v15H1z" fill="#2a9aa8" />
              <path d="M1 2h9l7 12-3 9L1 2z" fill="#a9dde0" />
              <path d="M24 2h9v27h-8z" fill="#33b2bf" />
              <path d="M1 4l8 12v13H1z" fill="#1e8e9c" />
            </svg>
          </div>
        </div>
        {/* outliner */}
        <div className="w-[263px] ml-[3px] shrink-0 flex flex-col pt-[2px]">
          <div className="h-[16px] flex">
            <div className="w-[64px] ml-[1px] h-full bg-[#444] rounded-t-[3px] text-[#ececec] flex items-center pl-[10px] pt-[1px]">Outliner</div>
          </div>
          <div className="h-[738px] bg-[#444] flex flex-col">
            <div className="h-[22px] shrink-0 flex items-center pl-[10px] pt-[1px]"><span className="w-[52px]">Display</span><span className="w-[44px]">Show</span><span>Help</span></div>
            <div className="h-[20px] shrink-0 mt-[5px] flex items-center pl-[8px]">
              <svg width="15" height="16" viewBox="0 0 15 16" className="block"><path d="M1 4V1h4M10 1h4v3M14 12v3h-4M5 15H1v-3" fill="none" stroke="#6d6d6d" strokeWidth="1.600" /><rect x="2.500" y="5" width="1.500" height="6" fill="#6d6d6d" /><rect x="11" y="5" width="1.500" height="6" fill="#6d6d6d" /></svg>
              <div className="ml-[7px] w-[228px] h-[18px] bg-[#2b2b2b] rounded-[2px] flex items-center pl-[3px] text-[#727272]">Search...<div className="ml-auto mr-[4px]"><Tri c="#c0c0c0" /></div></div>
            </div>
            <div className="flex-1 ml-[3px] mt-[2px] bg-[#383838] flex min-h-0">
              <div className="flex-1 -mt-[1px]">
                <Row icon={<Cam />} text="persp" dim />
                <Row icon={<Cam />} text="top" dim />
                <Row icon={<Cam />} text="front" dim />
                <Row icon={<Cam />} text="side" dim />
                <Row plus icon={<svg width="15" height="17" viewBox="0 0 15 17"><path d="M7.500 0v17M0 4l15 9M15 4L0 13" stroke={T} strokeWidth="2.200" /></svg>} text="Golf_Club_Iron_9_ncl1_1" />
                <Row icon={<SetIc />} text="defaultLightSet" />
                <Row icon={<SetIc />} text="defaultObjectSet" />
              </div>
              <div className="w-[10px] mr-[4px] flex flex-col items-center pt-[4px]">
                <svg width="10" height="6" className="shrink-0"><path d="M0 6h10L5 0z" fill="#bbb" /></svg>
                <div className="w-[10px] flex-1 bg-[#5d5d5d] rounded-[5px] mt-[3px]" />
                <svg width="10" height="6" className="shrink-0 mt-[3px] mb-[3px]"><path d="M0 0h10L5 6z" fill="#bbb" /></svg>
              </div>
            </div>
            <div className="h-[14px] ml-[3px] bg-[#3a3a3a] flex items-center pl-[5px] shrink-0">
              <svg width="6" height="10"><path d="M6 0v10L0 5z" fill="#c0c0c0" /></svg>
              <div className="ml-[2px] w-[218px] h-[10px] bg-[#5d5d5d] rounded-[5px]" />
              <svg width="6" height="10" className="ml-[3px]"><path d="M0 0v10l6-5z" fill="#c0c0c0" /></svg>
            </div>
            <div className="h-[8px] shrink-0 flex items-start justify-center"><div className="w-[86px] border-t border-dotted border-[#8a8a8a]" /></div>
          </div>
        </div>
        {/* viewport */}
        <div className="w-[1322px] ml-[5px] mt-[3px] h-[750px] shrink-0 border border-[#9a9a9a] flex flex-col bg-[#444]">
          <div className="h-[19px] shrink-0 flex items-center pl-[7px]">
            <span className="w-[41px]">View</span><span className="w-[57px]">Shading</span><span className="w-[58px]">Lighting</span><span className="w-[44px]">Show</span><span className="w-[63px]">Renderer</span><span>Panels</span>
          </div>
          <div className="h-[18px] shrink-0 flex items-center pl-[10px]">
            {vBar1}
            <VSep />
            {vBar2}
            <VSep />
            {vBar3}
            <VSep />
            {vBar4}
            <VSep />
            {vBar5}
            <VSep />
            {vBar6.slice(0, 1)}
            <VSep />
            {vBar6.slice(1)}
            <VSep />
            <VI><circle cx="8.500" cy="8.500" r="6.500" fill={G} /><path d="M8.500 2v4M15 8.500h-4M8.500 15v-4M2 8.500h4M4 4l3 3M13 4l-3 3" stroke="#444" /></VI>
            <Dark c="w-[38px] h-[18px] ml-[3px] pl-[5px]">0.00</Dark>
            <VI><path d="M11 4a5 5 0 0 0 0 9" fill="none" stroke={G} strokeWidth="2" /><path d="M9 5v7" stroke={G} strokeWidth="2" /></VI>
            <Dark c="w-[38px] h-[18px] ml-[3px] pl-[5px]">1.00</Dark>
            <div className="w-[18px] h-[18px] ml-[3px] bg-[#5285a6] rounded-[2px] flex items-center justify-center shrink-0">
              <V s={16} v={16}><circle cx="8" cy="8" r="6.500" fill="none" stroke="#e5e5e5" /><text x="8" y="10.500" textAnchor="middle" fontSize="6.500" fill="#e5e5e5" fontFamily="Liberation Sans, sans-serif">ON</text></V>
            </div>
            <div className="w-[144px] ml-[3px] h-[18px] bg-[#5d5d5d] flex items-center pl-[4px] text-[#c8c8c8] shrink-0 rounded-l-[2px]">sRGB gamma</div>
            <div className="w-[16px] ml-[1px] h-[18px] bg-[#5d5d5d] flex items-center justify-center shrink-0 rounded-r-[2px]"><Tri /></div>
          </div>
          <div className="flex-1 min-h-0 bg-[#5d5d5d] overflow-hidden mt-[3px]"><Scene /></div>
        </div>
        {/* right */}
        <div className="w-[264px] ml-[4px] shrink-0 bg-[#444] flex flex-col pt-[2px]">
          <div className="h-[20px] shrink-0 flex items-center justify-end pr-[5px] gap-[6px]">
            <V s={16} v={16}><path d="M8 1l3 3H9v3H7V4H5z" fill="#8fae5a" /><path d="M8 7l-5 4M8 7l5 4" stroke="#aaa" /><rect x="1" y="10" width="5" height="5" fill="#3c78c8" /><rect x="10" y="10" width="5" height="5" fill="#c84848" /></V>
            <V s={16} v={16}><path d="M2 14a6.500 6.500 0 1 1 12 0" fill="none" stroke={T} strokeWidth="3" /><circle cx="8" cy="9" r="2" fill="#ddd" /></V>
            <V s={16} v={16}><path d="M2 14L13 3" stroke={T} strokeWidth="1.800" /><path d="M9 2h5v5z" fill={T} /><path d="M1 1v14h14" fill="none" stroke="#888" /></V>
          </div>
          <div className="h-[20px] shrink-0 flex items-center pl-[12px] mt-[1px] pt-[1px]"><span className="w-[64px]">Channels</span><span className="w-[34px]">Edit</span><span className="w-[49px]">Object</span><span>Show</span></div>
          <div className="h-[487px] ml-[5px] mr-[5px] bg-[#2b2b2b] shrink-0" />
          <div className="h-[14px] shrink-0 flex items-start pt-[3px] justify-center"><div className="w-[86px] border-t border-dotted border-[#8a8a8a]" /></div>
          <div className="h-[16px] shrink-0 flex items-end ml-[6px] bg-[#383838] mr-[5px] pt-[1px]">
            <div className="w-[58px] h-[16px] bg-[#444] rounded-t-[3px] text-[#ececec] flex items-center justify-center pt-[1px]">Display</div>
            <div className="w-[48px] ml-[2px] h-[16px] bg-[#3c3c3c] border border-[#2e2e2e] border-b-0 rounded-t-[3px] text-[#7a7a7a] flex items-center justify-center">Anim</div>
          </div>
          <div className="flex-1 ml-[5px] mr-[5px] mb-[4px] border border-[#2e2e2e] border-t-0 flex flex-col min-h-0">
            <div className="h-[20px] shrink-0 flex items-center pl-[10px] pt-[2px]"><span className="w-[46px]">Layers</span><span className="w-[57px]">Options</span><span>Help</span></div>
            <div className="h-[24px] shrink-0 flex items-center justify-end pr-[9px] gap-[9px]">
              {['M10 3v7M7 6l3-4 3 4', 'M10 2v7M7 6l3 4 3-4', 'M10 5h6M13 2v6', ''].map((d, i) => (
                <V key={i} s={15} v={16}><path d="M8 7l-7 3 7 4 5-3V9z" fill="#c8c8c8" />{d ? <path d={d} fill="none" stroke={T} strokeWidth="2" /> : <circle cx="12" cy="5" r="3.500" fill={T} />}</V>
              ))}
            </div>
            <div className="flex-1 mx-[3px] bg-[#2b2b2b] flex flex-col min-h-0">
              <div className="flex-1 pt-[8px] pl-[4px]">
                <div className="flex items-center h-[15px] text-[12px]">
                  <div className="w-[20px] h-[14px] rounded-[3px] border border-[#1e1e1e] bg-[#333] text-[#e8e8e8] flex items-center justify-center">V</div>
                  <div className="w-[20px] h-[14px] ml-[3px] rounded-[3px] border border-[#1e1e1e] bg-[#333] text-[#e8e8e8] flex items-center justify-center">P</div>
                  <div className="w-[20px] h-[14px] ml-[3px] rounded-[3px] border border-[#1e1e1e] bg-[#333]" />
                  <div className="w-[16px] h-[14px] ml-[3px] bg-[#99002f]" />
                  <span className="ml-[3px] text-[#e6e6e6]">Golf_Club_Iron_9</span>
                </div>
              </div>
              <div className="h-[13px] bg-[#3a3a3a] flex items-center pl-[4px] shrink-0">
                <svg width="6" height="10"><path d="M6 0v10L0 5z" fill="#c0c0c0" /></svg>
                <div className="ml-[3px] w-[154px] h-[10px] bg-[#5d5d5d] rounded-[5px]" />
                <svg width="6" height="10" className="ml-auto mr-[4px]"><path d="M0 0v10l6-5z" fill="#c0c0c0" /></svg>
              </div>
            </div>
          </div>
        </div>
        {/* vertical tabs */}
        <div className="w-[15px] shrink-0 flex flex-col items-center pt-[11px] text-[12px]">
          <div className="h-[134px] w-full bg-[#444] text-[#d0d0d0] flex items-center justify-center [writing-mode:vertical-rl] whitespace-nowrap">Channel Box / Layer Editor</div>
          <div className="h-[92px] mt-[22px] w-full text-[#6f6f6f] flex items-center justify-center [writing-mode:vertical-rl] whitespace-nowrap">Modeling Toolkit</div>
          <div className="h-[86px] mt-[21px] w-full text-[#6f6f6f] flex items-center justify-center [writing-mode:vertical-rl] whitespace-nowrap">Attribute Editor</div>
        </div>
      </div>
      <div className="h-[3px] shrink-0 bg-[#353535]" />
      {/* time slider */}
      <div className="h-[35px] shrink-0 flex items-center pl-[3px]">
        <Handle c="h-[28px] mr-[5px]" />
        <div className="w-[1612px] h-[28px] bg-[#2b2b2b] flex relative shrink-0">
          <div className="w-[62px] shrink-0 pl-[9px]">
            <div className="w-[11px] h-[28px] bg-[#575757] flex items-end justify-center pb-[3px] text-[#e0e0e0]">1</div>
          </div>
          {ticks.map(t => (
            <div key={t} className="w-[66.47px] shrink-0 h-full relative">
              <span className={`absolute top-[0px] h-[12px] flex items-center text-[#6f6f6f] whitespace-nowrap ${t === 120 ? 'left-[3px]' : 'left-[1px]'}`}>{t}</span>
              <div className="absolute left-0 bottom-0 w-[2px] h-[15px] bg-[#7a7a7a]" />
            </div>
          ))}
        </div>
        <Dark c="w-[88px] h-[18px] ml-[7px] pl-[5px]">1</Dark>
        <div className="ml-[6px] flex">
          <Tp><path d="M2 3h2v12H2zM10 3v12L5 9zM16 3v12l-5-6z" fill={G} /></Tp>
          <Tp><path d="M3 3h2v12H3zM14 3v12L6 9z" fill={G} /></Tp>
          <Tp><path d="M5 1h2v16H5z" fill="#e07a3a" /><path d="M15 3v12L8 9z" fill={G} /></Tp>
          <Tp><path d="M14 2v14L3 9z" fill={G} /></Tp>
          <Tp><path d="M4 2v14l11-7z" fill={G} /></Tp>
          <Tp><path d="M11 1h2v16h-2z" fill="#e07a3a" /><path d="M3 3v12l7-6z" fill={G} /></Tp>
          <Tp><path d="M13 3h2v12h-2zM4 3v12l8-6z" fill={G} /></Tp>
          <Tp><path d="M14 3h2v12h-2zM2 3v12l5-6zM8 3v12l5-6z" fill={G} /></Tp>
        </div>
      </div>
      <div className="h-[3px] shrink-0 bg-[#353535]" />
      {/* range */}
      <div className="h-[35px] shrink-0 flex items-center pl-[3px]">
        <Handle c="h-[28px] mr-[6px]" />
        <Dark c="w-[88px] h-[25px] pl-[5px]">1</Dark>
        <Dark c="w-[88px] h-[25px] ml-[8px] pl-[7px]">1</Dark>
        <div className="w-[1021px] h-[25px] ml-[7px] bg-[#383838] shrink-0 flex items-center pl-[6px]">
          <div className="w-[615px] h-[20px] bg-[#5d5d5d] rounded-[3px] flex items-center pl-[4px] relative">
            <div className="w-[14px] h-[14px] rounded-[3px] bg-[#8e8e8e]" />
            <span className="ml-[4px]">1</span>
            <span className="ml-auto mr-[9px]">120</span>
            <div className="w-[14px] h-[14px] rounded-[3px] bg-[#8e8e8e] mr-[3px]" />
          </div>
        </div>
        <Dark c="w-[88px] h-[25px] ml-[7px] pl-[5px]">120</Dark>
        <Dark c="w-[88px] h-[25px] ml-[8px] pl-[5px]">200</Dark>
        <Sep c="w-[10px]" />
        <div className="w-[27px] flex justify-center shrink-0"><HollowTri /></div>
        <div className="w-[101px] h-[25px] border border-[#555] rounded-[2px] flex items-center pl-[5px] shrink-0 whitespace-nowrap">No Character Set</div>
        <div className="w-[28px] flex justify-center shrink-0"><HollowTri /></div>
        <div className="w-[101px] h-[25px] border border-[#555] rounded-[2px] flex items-center pl-[5px] shrink-0 whitespace-nowrap">No Anim Layer</div>
        <Sep c="w-[22px]" />
        <div className="w-[95px] h-[20px] ml-[3px] bg-[#5d5d5d] rounded-[2px] flex items-center pl-[3px] shrink-0">24 fps
          <div className="ml-auto w-[19px] h-full border-l border-[#444] flex items-center justify-center"><Tri /></div>
        </div>
        <div className="w-[44px] shrink-0 flex justify-center">
          <V s={20} v={20}><path d="M4 9a3 3 0 0 1 3-3h9M16 11a3 3 0 0 1-3 3H4" fill="none" stroke={G} strokeWidth="2" /><path d="M13 3l4 3-4 3zM7 11l-4 3 4 3z" fill={G} /></V>
        </div>
        <Sep c="w-[4px]" />
        <div className="w-[40px] shrink-0 flex justify-center">
          <V s={22} v={22}><path d="M18 16A8.500 8.500 0 1 0 8 19" fill="none" stroke={G} strokeWidth="1.400" /><path d="M11 6v9M6 11h9" stroke="#e07a3a" strokeWidth="1.600" /><path d="M16 17h4l-2-3z" fill={G} /></V>
        </div>
        <div className="w-[22px] shrink-0 flex justify-center">
          <V s={22} v={22}><circle cx="5" cy="5" r="3" fill="none" stroke={G} strokeWidth="1.800" /><circle cx="14" cy="7" r="2.500" fill="#e07a3a" /><path d="M14 9l-1 6-4 5M13 15l5 5M9 11h8M2 17l5-1" fill="none" stroke="#e07a3a" strokeWidth="2.200" /></V>
        </div>
      </div>
      <div className="h-[2px] shrink-0 bg-[#353535]" />
      {/* mel */}
      <div className="h-[31px] shrink-0 flex items-center pl-[3px]">
        <Handle c="h-[26px] mr-[16px]" />
        <span className="w-[35px] text-[#e8e8e8] shrink-0">MEL</span>
        <Dark c="w-[664px] h-[24px]" />
        <Dark c="w-[1156px] h-[24px] ml-[8px]" />
        <div className="ml-[6px] w-[18px]">
          <svg width="18" height="20" viewBox="0 0 18 20" className="block"><rect y="0" width="18" height="20" fill="#c4c4c4" /><path d="M1 2h2M5 2h2M9 2h2" stroke="#333" /><rect y="3.500" width="18" height="1" fill="#444" /><text x="9" y="16" textAnchor="middle" fontSize="10" fontWeight="700" fill="#333" fontFamily="Liberation Mono, monospace">{'{;}'}</text></svg>
        </div>
      </div>
      <div className="h-[2px] shrink-0 bg-[#353535]" />
      {/* help */}
      <div className="flex-1 flex items-center pl-[3px]">
        <Handle c="h-[17px] mr-[16px]" />
        <span className="text-[10px] text-[#c4c4c4]">Select Tool: select an object</span>
      </div>
    </div>
  );
}
